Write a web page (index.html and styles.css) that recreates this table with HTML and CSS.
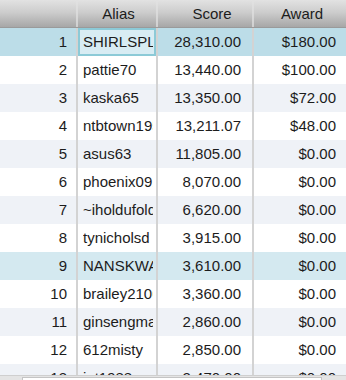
FILE: index.html
```html
<!DOCTYPE html>
<html>
<head>
<meta charset="utf-8">
<link rel="stylesheet" href="styles.css">
</head>
<body>
<div class="grid">
  <div class="row head">
    <div class="cell c1"></div>
    <div class="cell c2 hc">Alias</div>
    <div class="cell c3 hc hs">Score</div>
    <div class="cell c4 hc">Award</div>
  </div>
  <div class="body">
    <div class="row sel"><div class="cell c1">1</div><div class="cell c2 focus"><span class="clip">SHIRLSPLASH</span></div><div class="cell c3">28,310.00</div><div class="cell c4">$180.00</div></div>
    <div class="row"><div class="cell c1">2</div><div class="cell c2"><span class="clip">pattie70</span></div><div class="cell c3">13,440.00</div><div class="cell c4">$100.00</div></div>
    <div class="row alt"><div class="cell c1">3</div><div class="cell c2"><span class="clip">kaska65</span></div><div class="cell c3">13,350.00</div><div class="cell c4">$72.00</div></div>
    <div class="row"><div class="cell c1">4</div><div class="cell c2"><span class="clip">ntbtown1953</span></div><div class="cell c3">13,211.07</div><div class="cell c4">$48.00</div></div>
    <div class="row alt"><div class="cell c1">5</div><div class="cell c2"><span class="clip">asus63</span></div><div class="cell c3">11,805.00</div><div class="cell c4">$0.00</div></div>
    <div class="row"><div class="cell c1">6</div><div class="cell c2"><span class="clip">phoenix0911</span></div><div class="cell c3">8,070.00</div><div class="cell c4">$0.00</div></div>
    <div class="row alt"><div class="cell c1">7</div><div class="cell c2"><span class="clip">~iholdufolds</span></div><div class="cell c3">6,620.00</div><div class="cell c4">$0.00</div></div>
    <div class="row"><div class="cell c1">8</div><div class="cell c2"><span class="clip">tynicholsd</span></div><div class="cell c3">3,915.00</div><div class="cell c4">$0.00</div></div>
    <div class="row hov"><div class="cell c1">9</div><div class="cell c2"><span class="clip">NANSKWAT</span></div><div class="cell c3">3,610.00</div><div class="cell c4">$0.00</div></div>
    <div class="row"><div class="cell c1">10</div><div class="cell c2"><span class="clip">brailey2106</span></div><div class="cell c3">3,360.00</div><div class="cell c4">$0.00</div></div>
    <div class="row alt"><div class="cell c1">11</div><div class="cell c2"><span class="clip">ginsengman</span></div><div class="cell c3">2,860.00</div><div class="cell c4">$0.00</div></div>
    <div class="row"><div class="cell c1">12</div><div class="cell c2"><span class="clip">612misty</span></div><div class="cell c3">2,850.00</div><div class="cell c4">$0.00</div></div>
    <div class="row alt"><div class="cell c1">13</div><div class="cell c2"><span class="clip">jnt1988</span></div><div class="cell c3">2,470.00</div><div class="cell c4">$0.00</div></div>
  </div>
  <div class="hscroll">
    <div class="thumb"></div>
  </div>
</div>
</body>
</html>
```
FILE: styles.css
```css
html, body {
  margin: 0;
  padding: 0;
  background: #ffffff;
}
.grid {
  width: 346px;
  height: 380px;
  overflow: hidden;
  font-family: "Liberation Sans", Arial, sans-serif;
  font-size: 15px;
  color: #1c1c1c;
}
.row {
  display: flex;
  height: 28px;
}
.cell {
  box-sizing: border-box;
  height: 28px;
  line-height: 28px;
  white-space: nowrap;
  overflow: hidden;
  text-overflow: clip;
  border-right: 2px solid #d3d3d3;
}
.c1 { width: 78px; text-align: right; padding-right: 9px; }
.c2 { width: 80px; text-align: left; padding-left: 5px; padding-right: 3px; }
.c3 { width: 96px; text-align: right; padding-right: 11px; }
.c4 { width: 92px; text-align: right; padding-right: 10px; border-right: none; }
.clip {
  display: block;
  overflow: hidden;
  white-space: nowrap;
}
.head {
  background: linear-gradient(to bottom, #e2e2e2 0%, #cdcdcd 45%, #a7a7a7 100%);
  border-bottom: 1px solid #9a9a9a;
  height: 28px;
  box-sizing: border-box;
}
.head .cell {
  height: 27px;
  line-height: 27px;
  border-right: 2px solid rgba(225, 225, 225, 0.7);
}
.head .c4 { border-right: none; }
.hc { text-align: center; padding: 0; }
.head .c2 { padding-left: 3px; padding-right: 0; }
.head .hs { padding-left: 14px; }
.head .c4 { padding-left: 4px; }
.body {
  height: 347px;
  overflow: hidden;
}
.alt { background: #eff2f7; }
.sel { background: #bcdde8; }
.hov { background: #d4e9f0; }
.focus {
  background: #d8ecf3;
  box-shadow: inset 0 0 0 2px #8ccad7;
}
.hscroll {
  height: 17px;
  background: #e4e4e4;
  border-top: 1px solid #cfcfcf;
  padding-left: 22px;
  box-sizing: border-box;
}
.thumb {
  width: 300px;
  height: 14px;
  background: #ffffff;
  border: 1px solid #c4c4c4;
  box-sizing: border-box;
  margin-top: 1px;
}
```
